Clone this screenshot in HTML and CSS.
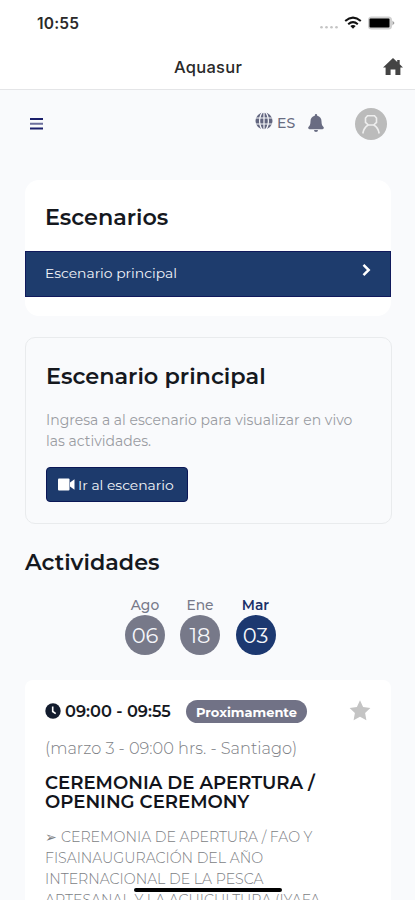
FILE: index.html
```html
<!DOCTYPE html>
<html lang="es">
<head>
<meta charset="utf-8">
<meta name="viewport" content="width=device-width">
<title>Aquasur</title>
<link rel="stylesheet" href="styles.css">
</head>
<body>
<div class="app">
  <header class="top">
    <div class="status">
      <span class="clock">10:55</span>
      <svg class="status-icons" width="76" height="18" viewBox="0 0 76 18">
        <g fill="#c4c4c4"><circle cx="2.500" cy="13.200" r="1.300"/><circle cx="7.500" cy="13.200" r="1.300"/><circle cx="12.500" cy="13.200" r="1.300"/><circle cx="17.500" cy="13.200" r="1.300"/></g>
        <g fill="none" stroke="#111" stroke-width="2"><path d="M26.200 7Q34 .2 41.800 7"/><path d="M29.200 10.200Q34 6 38.800 10.200"/></g>
        <path d="M31.300 12Q34 10 36.700 12L34 14.700z" fill="#111"/>
        <rect x="49" y="2.500" width="24" height="13" rx="3.500" fill="#d0d0d0"/>
        <rect x="50.500" y="4.500" width="20" height="9" rx="1" fill="#000"/>
        <path d="M73.500 6.500L75.500 9l-2 2.500z" fill="#999"/>
      </svg>
    </div>
    <div class="title-row">
      <h1 class="title">Aquasur</h1>
      <svg class="home" width="20" height="18" viewBox="0 0 20 18"><path d="M10 0L0 9.500h2.600V17h5v-5.500h4.800V17h5V9.500H20L16.700 6.300V2h-2.500v2z" fill="#444"/></svg>
    </div>
  </header>

  <nav class="toolbar">
    <svg class="menu" width="13" height="12" viewBox="0 0 13 12"><path d="M0 1h13M0 10.500h13" stroke="#1b1f6b" stroke-width="2"/><path d="M0 5.750h13" stroke="#6b6e9c" stroke-width="2"/></svg>
    <svg class="globe" width="18" height="18" viewBox="0 0 18 18"><circle cx="9" cy="9" r="8.500" fill="#62657f"/><g fill="none" stroke="#f8f9fc" stroke-width="1.200"><ellipse cx="9" cy="9" rx="4.400" ry="9"/><path d="M9 0v18M0 6h18M0 12h18"/></g></svg>
    <span class="lang">ES</span>
    <svg class="bell" width="16" height="18" viewBox="0 0 16 18"><path d="M8 0a1.200 1.200 0 0 0-1.200 1.200v.5C4 2.300 2.500 4.500 2.500 7.200c0 3.300-.8 4.500-2 5.800-.9 1 .1 2.200 1 2.200h13c.9 0 1.900-1.200 1-2.200-1.200-1.300-2-2.500-2-5.800 0-2.700-1.500-4.900-4.300-5.500v-.5A1.200 1.200 0 0 0 8 0zM6 16.100a2 1.900 0 0 0 4 0z" fill="#696c82"/></svg>
    <svg class="avatar" width="32" height="32" viewBox="0 0 32 32"><circle cx="16" cy="16" r="16" fill="#bbb"/><g fill="none" stroke="#eee" stroke-width="1.600"><path d="M12.500 7.700h7l2 2.300v4.300L18.700 17h-5.400l-2.800-2.700V10z"/><path d="M7.800 25.500c.7-4.300 2.800-7 5.500-8.500M24.200 25.500c-.7-4.300-2.800-7-5.500-8.500"/></g></svg>
  </nav>

  <main class="content">
    <section class="stages">
      <h2 class="heading stages-heading">Escenarios</h2>
      <a class="stage-item"><span class="stage-name">Escenario principal</span>
        <svg class="chevron" width="9" height="14" viewBox="0 0 9 14"><path d="M1.500 1.800L6.700 7l-5.200 5.200" fill="none" stroke="#fff" stroke-width="2.500"/></svg></a>
    </section>

    <section class="stage-card">
      <h2 class="heading main-heading">Escenario principal</h2>
      <p class="intro">Ingresa a al escenario para visualizar en vivo<br>las actividades.</p>
      <a class="button"><svg width="17" height="13" viewBox="0 0 17 13"><rect y=".5" width="11.500" height="12" rx="1" fill="#fff"/><path d="M12 4.500L16.500 1.200v10.600L12 8.500z" fill="#fff"/></svg><span class="button-label">Ir al escenario</span></a>
    </section>

    <h2 class="heading activities-heading">Actividades</h2>
    <div class="dates">
      <div class="date"><span class="month">Ago</span><span class="day">06</span></div>
      <div class="date"><span class="month">Ene</span><span class="day">18</span></div>
      <div class="date active"><span class="month">Mar</span><span class="day">03</span></div>
    </div>

    <article class="activity">
      <div class="time-row">
        <svg class="clock-icon" width="16" height="16" viewBox="0 0 16 16"><circle cx="8" cy="8" r="7.700" fill="#131c2e"/><path d="M7.700 3.500v5l3 2.200" fill="none" stroke="#fff" stroke-width="1.600"/></svg>
        <span class="time">09:00 - 09:55</span>
        <span class="badge">Proximamente</span>
        <svg class="star" width="22" height="21" viewBox="0 0 22 21"><path d="M11 .3l3.100 6.600 7.300 1-5.300 5 1.300 7.300-6.400-3.500-6.400 3.500 1.300-7.300-5.300-5 7.300-1z" fill="#c4c4c4"/></svg>
      </div>
      <p class="local-time">(marzo 3 - 09:00 hrs. - Santiago)</p>
      <h3 class="activity-title">CEREMONIA DE APERTURA /<br>OPENING CEREMONY</h3>
      <p class="description"><span class="arrow">➢</span>CEREMONIA DE APERTURA / FAO Y<br>FISAINAUGURACIÓN DEL AÑO<br>INTERNACIONAL DE LA PESCA<br>ARTESANAL Y LA ACUICULTURA (IYAFA</p>
    </article>
  </main>
  <div class="home-indicator"></div>
</div>
</body>
</html>
```
FILE: styles.css
```css
* { box-sizing: border-box; margin: 0; padding: 0; }
body { font-family: Montserrat, Inter, sans-serif; color: #15181e; background: #f9fafc; }
.app { position: relative; width: 415px; height: 900px; overflow: hidden; background: #f9fafc; }
svg { display: block; flex: none; }
span { white-space: nowrap; }

.top { height: 90px; background: #fff; border-bottom: 1px solid #e4e5e7; }
.status { display: flex; justify-content: space-between; height: 46px; padding: 14px 20px 0 37px; }
.clock { font: 600 15.5px/19px Inter, sans-serif; letter-spacing: .2px; color: #2a2a2a; }
.title-row { display: grid; grid-template-columns: 1fr auto; padding: 11px 12px 0 174px; }
.title { font: 500 16.5px/20px Inter, sans-serif; letter-spacing: .25px; color: #2a2a2a; }
.home { margin-top: 1px; }

.toolbar { display: flex; height: 90px; padding: 18px 28px 0 30px; }
.menu { margin-top: 10px; }
.globe { margin: 4px 0 0 212px; }
.lang { width: 35px; padding-left: 4px; font-size: 14px; font-weight: 500; line-height: 31px; color: #696c82; }
.bell { margin-top: 6px; }
.avatar { margin-left: auto; }

.content { padding: 0 23px 0 25px; }
.heading { font-size: 22.3px; font-weight: 600; line-height: 28px; }
.stages { width: 366px; height: 136px; padding-top: 23px; border-radius: 14px; background: #fff; }
.stages-heading { padding-left: 20px; }
.stage-item { display: flex; justify-content: space-between; height: 46px; margin-top: 20px; padding: 11px 19px 0 20px; border: 1px solid #101a5c; background: #1e3c6d; color: #f3f5fa; }
.stage-name { margin-left: -1px; font-size: 13.9px; line-height: 20px; }

.stage-card { height: 187px; margin-top: 21px; padding: 24px 19px 0 20px; border: 1px solid #e9ebed; border-radius: 10px; }
.main-heading { font-size: 22.4px; }
.intro { margin-top: 20px; font-size: 14px; line-height: 21px; white-space: nowrap; color: #9a9ca2; }
.button { display: flex; align-items: center; width: 142px; height: 35px; margin-top: 15px; padding-left: 11px; border: 1px solid #0b1756; border-radius: 4px; background: #1d3a6c; color: #f6f7fa; font-size: 13.9px; }
.button-label { margin-left: 3px; }

.activities-heading { margin-top: 24px; }
.dates { display: flex; gap: 15px; margin: 19px 0 0 100px; }
.date { display: flex; flex-direction: column; align-items: center; width: 40px; color: #777989; }
.month { font-size: 13.8px; font-weight: 500; line-height: 20px; }
.day { width: 40px; height: 40px; border-radius: 50%; background: #777989; color: #f5f6fa; font-size: 21px; line-height: 42px; text-align: center; }
.active { width: 41px; color: #1b3068; }
.active .month { font-weight: 600; }
.active .day { background: #1c3870; }

.activity { width: 366px; height: 260px; margin-top: 25px; padding: 20px 20px 0; border-radius: 8px; background: #fff; }
.time-row { display: flex; height: 23px; align-items: center; }
.clock-icon { margin-top: -2px; }
.time { width: 121px; margin: -2px 0 0 4px; font-size: 16.2px; font-weight: 600; }
.badge { width: 121px; height: 23px; border-radius: 12px; background: #717286; color: #fff; font-size: 13px; font-weight: 700; line-height: 24px; text-align: center; }
.star { margin: -3px 0 0 auto; }
.local-time { margin-top: 15px; font-size: 16.2px; font-weight: 300; line-height: 20px; white-space: nowrap; color: #7c7e84; }
.activity-title { margin-top: 16px; font-size: 18.15px; font-weight: 600; line-height: 18.5px; color: #12141b; }
.description { margin-top: 16px; font-size: 14.15px; font-weight: 300; line-height: 21px; white-space: nowrap; color: #7c7e84; }
.arrow { display: inline-block; width: 16px; font-family: "DejaVu Sans", sans-serif; font-size: 14px; line-height: 14px; }
.home-indicator { position: absolute; left: 134px; top: 888px; width: 148px; height: 4px; border-radius: 2px; background: #000; }
```
